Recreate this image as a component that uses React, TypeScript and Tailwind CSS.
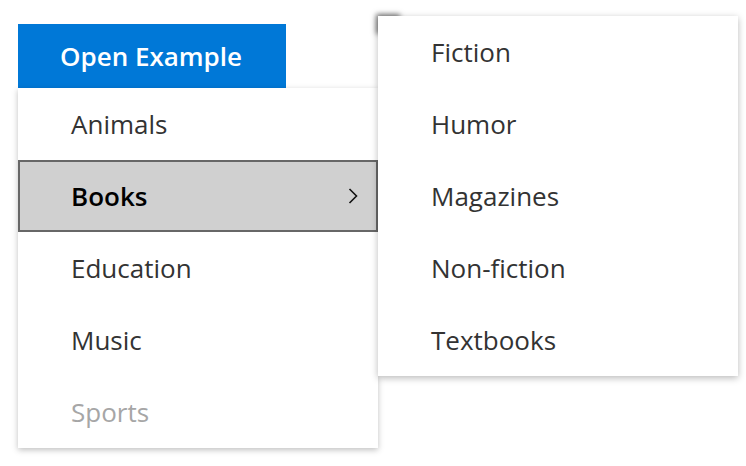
import React from "react";

const font = { fontFamily: '"Open Sans", "Noto Sans", sans-serif' };

function Item({ label, disabled }: { label: string; disabled?: boolean }) {
  return (
    <li
      className={`h-[72px] flex items-center pl-[53px] text-[26px] ${disabled ? "text-[#a6a6a6]" : "text-[#333333]"}`}
    >
      {label}
    </li>
  );
}

export default function App() {
  return (
    <div className="relative w-[746px] h-[466px] bg-white overflow-hidden" style={font}>
      <div className="pl-[18px] pt-[24px]">
        <button className="w-[268px] h-[64px] bg-[#0078d7] text-white text-[26px] font-semibold text-left pl-[42px] relative z-0">
          Open Example
        </button>
        <ul className="w-[360px] bg-white shadow-[0_2px_6px_rgba(0,0,0,0.25)] relative z-10">
          <Item label="Animals" />
          <li className="h-[72px] flex items-center justify-between pl-[51px] pr-[18px] text-[26px] font-semibold text-black bg-[#d0d0d0] border-2 border-[#676767]">
            <span>Books</span>
            <svg width="10" height="16" viewBox="0 0 10 16" fill="none">
              <path d="M1.5 1 L8.5 8 L1.5 15" stroke="#111" strokeWidth="1.6" />
            </svg>
          </li>
          <Item label="Education" />
          <Item label="Music" />
          <Item label="Sports" disabled />
        </ul>
      </div>
      <div className="absolute left-[378px] top-[16px] w-[24px] h-[20px] z-20 shadow-[-2px_-2px_5px_rgba(0,0,0,0.5)]" />
      <ul className="absolute left-[378px] top-[16px] w-[360px] bg-white shadow-[0_2px_7px_rgba(0,0,0,0.28)] z-30">
        <Item label="Fiction" />
        <Item label="Humor" />
        <Item label="Magazines" />
        <Item label="Non-fiction" />
        <Item label="Textbooks" />
      </ul>
    </div>
  );
}
